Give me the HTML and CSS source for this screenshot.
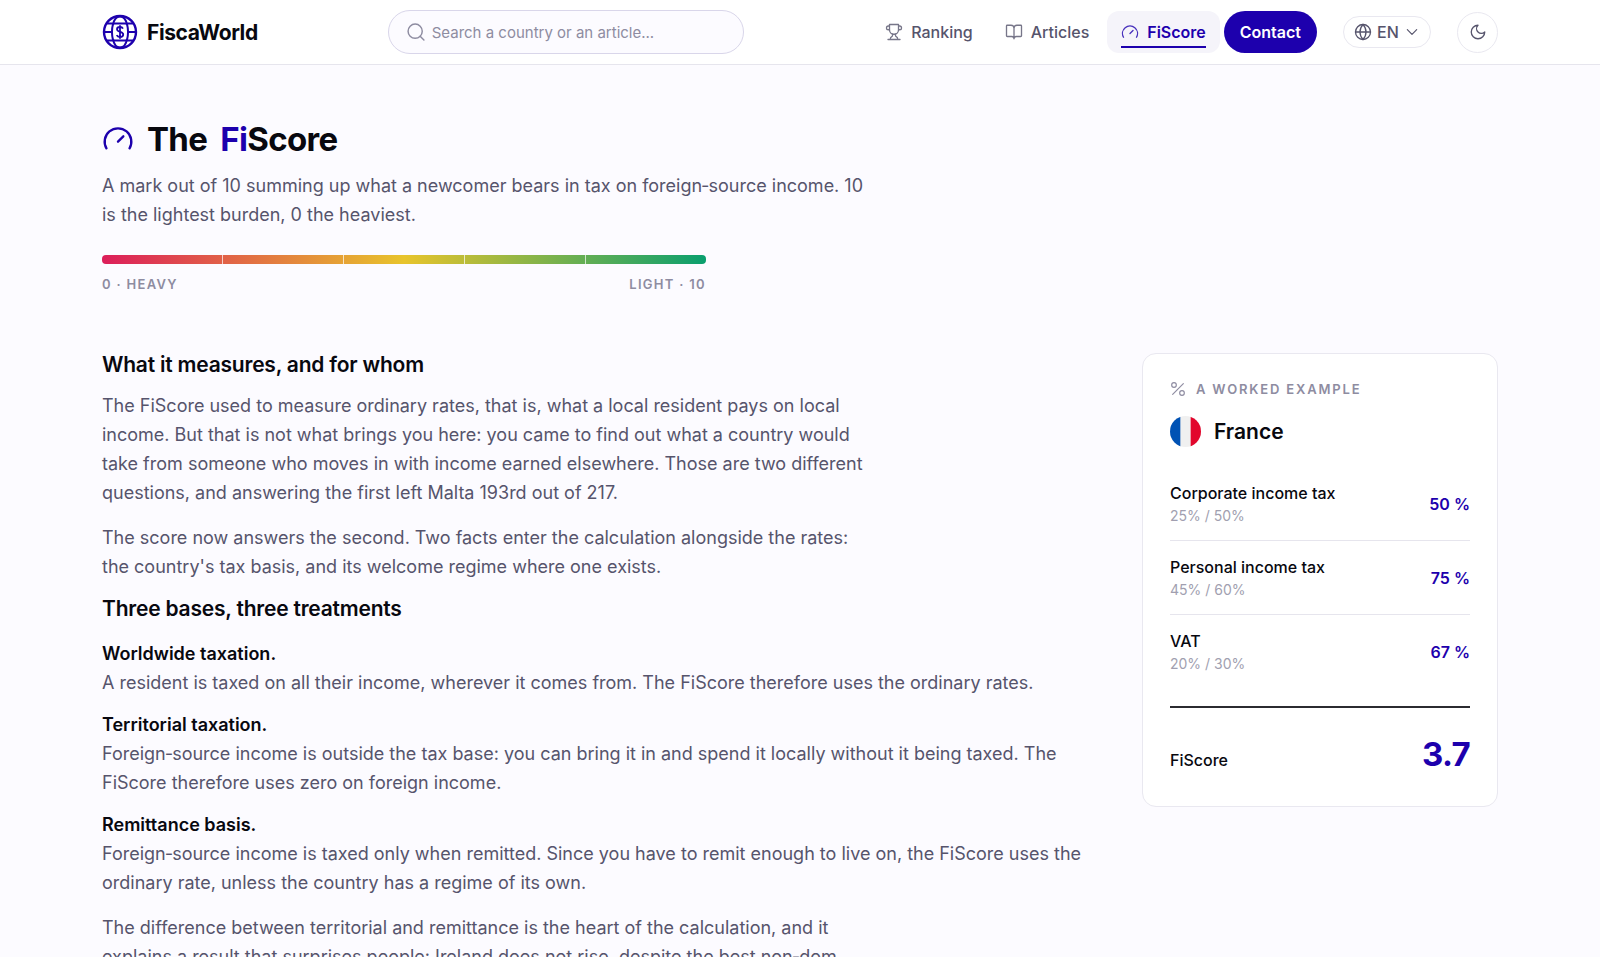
FILE: index.html
```html
<!DOCTYPE html>
<html lang="en">
<head>
  <meta charset="UTF-8">
  <meta name="viewport" content="width=device-width, initial-scale=1.0">
  <title>The FiScore - FiscaWorld</title>
  <link rel="stylesheet" href="styles.css">
</head>
<body>

  <header class="site-header">
    <div class="container header-inner">
      <a class="brand" href="#">
        <svg class="brand-icon" viewBox="0 0 36 36" fill="none" stroke="currentColor" stroke-width="2" aria-hidden="true">
          <circle cx="18" cy="18" r="16" stroke-width="2.4"/>
          <path d="M11 11C12 5 15 2.500 18 2.500s6 2.500 7 8.500M11 25c1 6 4 8.500 7 8.500s6-2.500 7-8.500"/>
          <path d="M11 10c-1.300 5-1.300 11 0 16M25 10c1.300 5 1.300 11 0 16"/>
          <path d="M5 9.500h26M5 26.500h26M2 18h8M26 18h8"/>
          <path d="M21 14.600c-.6-1.100-1.700-1.600-3-1.600-1.800 0-3 .9-3 2.300 0 3.400 6.200 1.800 6.200 5.200 0 1.500-1.300 2.500-3.200 2.500-1.500 0-2.700-.6-3.300-1.800M18 11.300v13.400" stroke-width="1.800"/>
        </svg>
        <span>FiscaWorld</span>
      </a>

      <label class="search">
        <svg class="icon" viewBox="0 0 24 24" aria-hidden="true"><circle cx="11" cy="11" r="8.500"/><path d="m21.500 21.500-4.500-4.500"/></svg>
        <input type="search" placeholder="Search a country or an article..." aria-label="Search">
      </label>

      <nav class="nav">
        <a class="nav-link" href="#">
          <svg class="icon" viewBox="0 0 24 24" aria-hidden="true"><path d="M6 9H4.500a2.500 2.500 0 0 1 0-5H6M18 9h1.500a2.500 2.500 0 0 0 0-5H18M4 22h16M10 14.660V17c0 .55-.47.98-.97 1.210C7.850 18.750 7 20.240 7 22M14 14.660V17c0 .55.47.98.97 1.210C16.150 18.750 17 20.240 17 22M18 2H6v7a6 6 0 0 0 12 0V2Z"/></svg>
          <span>Ranking</span>
        </a>
        <a class="nav-link" href="#">
          <svg class="icon" viewBox="0 0 24 24" aria-hidden="true"><path d="M12 7v14M3 18a1 1 0 0 1-1-1V4a1 1 0 0 1 1-1h5a4 4 0 0 1 4 4 4 4 0 0 1 4-4h5a1 1 0 0 1 1 1v13a1 1 0 0 1-1 1h-6a3 3 0 0 0-3 3 3 3 0 0 0-3-3z"/></svg>
          <span>Articles</span>
        </a>
        <a class="nav-link active" href="#" aria-current="page">
          <svg class="icon" viewBox="0 0 24 24" aria-hidden="true"><path d="m12 14 4-4M3.340 19a10 10 0 1 1 17.320 0"/></svg>
          <span>FiScore</span>
        </a>
        <a class="contact" href="#">Contact</a>
      </nav>

      <label class="lang">
        <svg class="icon" viewBox="0 0 24 24" aria-hidden="true"><circle cx="12" cy="12" r="10"/><path d="M12 2a14.500 14.500 0 0 0 0 20 14.500 14.500 0 0 0 0-20M2 12h20"/></svg>
        <select aria-label="Language">
          <option>EN</option>
        </select>
        <svg class="icon chevron" viewBox="0 0 24 24" aria-hidden="true"><path d="m5 8.500 7 7 7-7"/></svg>
      </label>

      <button class="theme-btn" type="button" aria-label="Dark mode">
        <svg class="icon" viewBox="0 0 24 24" aria-hidden="true"><path d="M12 3a6 6 0 0 0 9 9 9 9 0 1 1-9-9Z"/></svg>
      </button>
    </div>
  </header>

  <main class="container">
    <section class="hero">
      <h1>
        <svg class="icon" viewBox="0 0 24 24" aria-hidden="true"><path d="m12 14 4-4M3.340 19a10 10 0 1 1 17.320 0"/></svg>
        <span>The</span>
        <span><span class="accent">Fi</span>Score</span>
      </h1>
      <p class="lead">A mark out of 10 summing up what a newcomer bears in tax on foreign‑source income. 10 is the lightest burden, 0 the heaviest.</p>
      <div class="scale">
        <div class="scale-bar"><i></i><i></i><i></i><i></i><i></i></div>
        <div class="scale-labels">
          <span>0 · HEAVY</span>
          <span>LIGHT · 10</span>
        </div>
      </div>
    </section>

    <div class="content">
      <article class="prose">
        <h2>What it measures, and for whom</h2>
        <p>The FiScore used to measure ordinary rates, that is, what a local resident pays on local income. But that is not what brings you here: you came to find out what a country would take from someone who moves in with income earned elsewhere. Those are two different questions, and answering the first left Malta 193rd out of 217.</p>
        <p>The score now answers the second. Two facts enter the calculation alongside the rates: the country's tax basis, and its welcome regime where one exists.</p>

        <h2>Three bases, three treatments</h2>
        <dl class="bases">
          <div>
            <dt>Worldwide taxation.</dt>
            <dd>A resident is taxed on all their income, wherever it comes from. The FiScore therefore uses the ordinary rates.</dd>
          </div>
          <div>
            <dt>Territorial taxation.</dt>
            <dd>Foreign‑source income is outside the tax base: you can bring it in and spend it locally without it being taxed. The FiScore therefore uses zero on foreign income.</dd>
          </div>
          <div>
            <dt>Remittance basis.</dt>
            <dd>Foreign‑source income is taxed only when remitted. Since you have to remit enough to live on, the FiScore uses the ordinary rate, unless the country has a regime of its own.</dd>
          </div>
        </dl>
        <p>The difference between territorial and remittance is the heart of the calculation, and it explains a result that surprises people: Ireland does not rise, despite the best non‑dom</p>
      </article>

      <aside class="card">
        <p class="card-label">
          <svg class="icon" viewBox="0 0 24 24" aria-hidden="true"><path d="M20 4 4 20"/><circle cx="6" cy="6" r="3.500"/><circle cx="18" cy="18" r="3.500"/></svg>
          <span>A WORKED EXAMPLE</span>
        </p>
        <h3>
          <svg class="flag" viewBox="0 0 30 30" aria-hidden="true">
            <clipPath id="round"><circle cx="15" cy="15" r="15"/></clipPath>
            <g clip-path="url(#round)"><path fill="#f0f0f0" d="M0 0h30v30H0z"/><path fill="#0052b4" d="M0 0h10v30H0z"/><path fill="#e2062c" d="M20 0h10v30H20z"/></g>
          </svg>
          France
        </h3>
        <table class="rates">
          <tr>
            <th scope="row">Corporate income tax<small>25% / 50%</small></th>
            <td>50 %</td>
          </tr>
          <tr>
            <th scope="row">Personal income tax<small>45% / 60%</small></th>
            <td>75 %</td>
          </tr>
          <tr>
            <th scope="row">VAT<small>20% / 30%</small></th>
            <td>67 %</td>
          </tr>
        </table>
        <div class="total">
          <span>FiScore</span>
          <strong>3.7</strong>
        </div>
      </aside>
    </div>
  </main>

</body>
</html>
```
FILE: styles.css
```css
* {
  box-sizing: border-box;
}

body {
  margin: 0;
  font-family: Inter, "Liberation Sans", sans-serif;
  font-size: 18px;
  color: #56546c;
  background-color: #fcfbff;
}

a {
  color: inherit;
  text-decoration: none;
}

.container {
  max-width: 1460px;
  margin: 0 auto;
  padding: 0 32px;
}

.icon {
  width: 18px;
  height: 18px;
  flex: none;
  fill: none;
  stroke: currentColor;
  stroke-width: 1.75;
  stroke-linecap: round;
  stroke-linejoin: round;
}

.accent {
  color: #1d00ad;
}

/* Header */
.site-header {
  background-color: #fff;
  border-bottom: 1px solid #e6e5ed;
}

.header-inner {
  display: flex;
  align-items: center;
  height: 64px;
}

.brand {
  display: flex;
  align-items: center;
  gap: 9px;
  font-size: 21px;
  font-weight: 700;
  letter-spacing: -0.02em;
  color: #08080f;
}

.brand-icon {
  width: 36px;
  height: 36px;
  color: #1d00ad;
}

.search {
  display: flex;
  align-items: center;
  gap: 6px;
  width: 356px;
  height: 44px;
  margin-left: 130px;
  padding: 0 17px;
  border: 1px solid #d9d6ea;
  border-radius: 22px;
  background-color: #fcfbff;
  color: #8e8ca1;
}

.search .icon {
  width: 20px;
  height: 20px;
}

.search input {
  flex: 1;
  min-width: 0;
  padding: 0;
  border: none;
  outline: none;
  background: none;
  font: inherit;
  font-size: 15px;
}

.search input::placeholder {
  color: #8e8ca1;
  opacity: 1;
}

.nav {
  display: flex;
  align-items: center;
  gap: 4px;
  margin-left: auto;
  font-size: 16px;
  font-weight: 500;
}

.nav-link {
  position: relative;
  display: flex;
  align-items: center;
  gap: 8px;
  height: 42px;
  padding: 0 14px;
  border-radius: 12px;
}

.nav-link .icon {
  opacity: 0.8;
}

.nav-link.active {
  color: #1d00ad;
  background-color: #f5f4fa;
  font-weight: 600;
}

.nav-link.active::after {
  content: "";
  position: absolute;
  left: 14px;
  right: 14px;
  bottom: 5px;
  height: 2px;
  background-color: #1d00ad;
}

.contact {
  padding: 0 16px;
  border-radius: 21px;
  background-color: #1d00ad;
  color: #fff;
  font-weight: 600;
  line-height: 42px;
}

.lang {
  display: flex;
  align-items: center;
  gap: 5px;
  height: 32px;
  margin-left: 26px;
  padding: 0 10px;
  border: 1px solid #e9e8f0;
  border-radius: 16px;
}

.lang select {
  appearance: none;
  padding: 0;
  border: none;
  background: none;
  color: inherit;
  font: inherit;
  font-size: 16px;
  font-weight: 500;
}

.lang .chevron {
  width: 16px;
  height: 16px;
}

.theme-btn {
  display: flex;
  align-items: center;
  justify-content: center;
  width: 41px;
  height: 41px;
  margin-left: 26px;
  padding: 0;
  border: 1px solid #e9e8f0;
  border-radius: 50%;
  background: none;
  color: inherit;
  cursor: pointer;
}

/* Hero */
.hero {
  padding: 52px 0 59px;
}

h1 {
  display: flex;
  align-items: center;
  gap: 13px;
  margin: 0 0 10px;
  font-size: 33px;
  line-height: 44px;
  font-weight: 700;
  letter-spacing: -0.02em;
  color: #08080f;
}

h1 .icon {
  width: 32px;
  height: 32px;
  color: #1d00ad;
}

.lead {
  max-width: 768px;
  margin: 0 0 26px;
  line-height: 29px;
}

.scale {
  max-width: 604px;
}

.scale-bar {
  display: flex;
  height: 9px;
  border-radius: 4px;
  background: linear-gradient(90deg, #dc1e5a, #e8c42c 50%, #0a9f6e);
}

.scale-bar i {
  flex: 1;
}

.scale-bar i + i {
  border-left: 1px solid rgba(255, 255, 255, 0.7);
}

.scale-labels {
  display: flex;
  justify-content: space-between;
  margin-top: 10px;
  font-size: 13px;
  line-height: 20px;
  font-weight: 600;
  letter-spacing: 0.1em;
  color: #8e8ca1;
}

/* Article */
.content {
  display: grid;
  grid-template-columns: 1fr 356px;
  gap: 56px;
  align-items: start;
}

h2 {
  margin: 0 0 14px;
  font-size: 21px;
  line-height: 24px;
  font-weight: 600;
  letter-spacing: -0.01em;
  color: #08080f;
}

.prose p {
  max-width: 768px;
  margin: 0 0 16px;
  line-height: 29px;
}

.bases {
  margin: 18px 0 16px;
  line-height: 29px;
}

.bases div + div {
  margin-top: 13px;
}

.bases dt {
  font-weight: 600;
  color: #08080f;
}

.bases dd {
  margin: 0;
}

/* Worked example */
.card {
  padding: 23px 27px 30px;
  border: 1px solid #e9e8f0;
  border-radius: 14px;
  background-color: #fff;
}

.card-label {
  display: flex;
  align-items: center;
  gap: 10px;
  margin: 0 0 15px;
  font-size: 13px;
  line-height: 24px;
  font-weight: 600;
  letter-spacing: 0.14em;
  color: #8e8ca1;
}

.card-label .icon {
  width: 16px;
  height: 16px;
}

.card h3 {
  display: flex;
  align-items: center;
  gap: 13px;
  margin: 0 0 20px;
  font-size: 21px;
  line-height: 30px;
  font-weight: 600;
  color: #08080f;
}

.flag {
  width: 31px;
  height: 31px;
}

.rates {
  width: 100%;
  border-collapse: collapse;
}

.rates th,
.rates td {
  padding: 14px 0 13px;
}

.rates th {
  font-size: 16px;
  line-height: 24px;
  font-weight: 500;
  text-align: left;
  color: #08080f;
}

.rates tr + tr {
  border-top: 1px solid #e6e5ed;
}

.rates small {
  display: block;
  font-size: 14px;
  line-height: 22px;
  font-weight: 400;
  color: #a19fb0;
}

.rates td {
  font-size: 16px;
  font-weight: 600;
  text-align: right;
  color: #1d00ad;
}

.total {
  display: flex;
  align-items: baseline;
  justify-content: space-between;
  margin-top: 18px;
  padding-top: 24px;
  border-top: 2px solid #2b2b30;
  font-size: 16px;
  font-weight: 500;
  color: #08080f;
}

.total strong {
  font-size: 33px;
  line-height: 44px;
  letter-spacing: -0.02em;
  color: #1d00ad;
}
```
